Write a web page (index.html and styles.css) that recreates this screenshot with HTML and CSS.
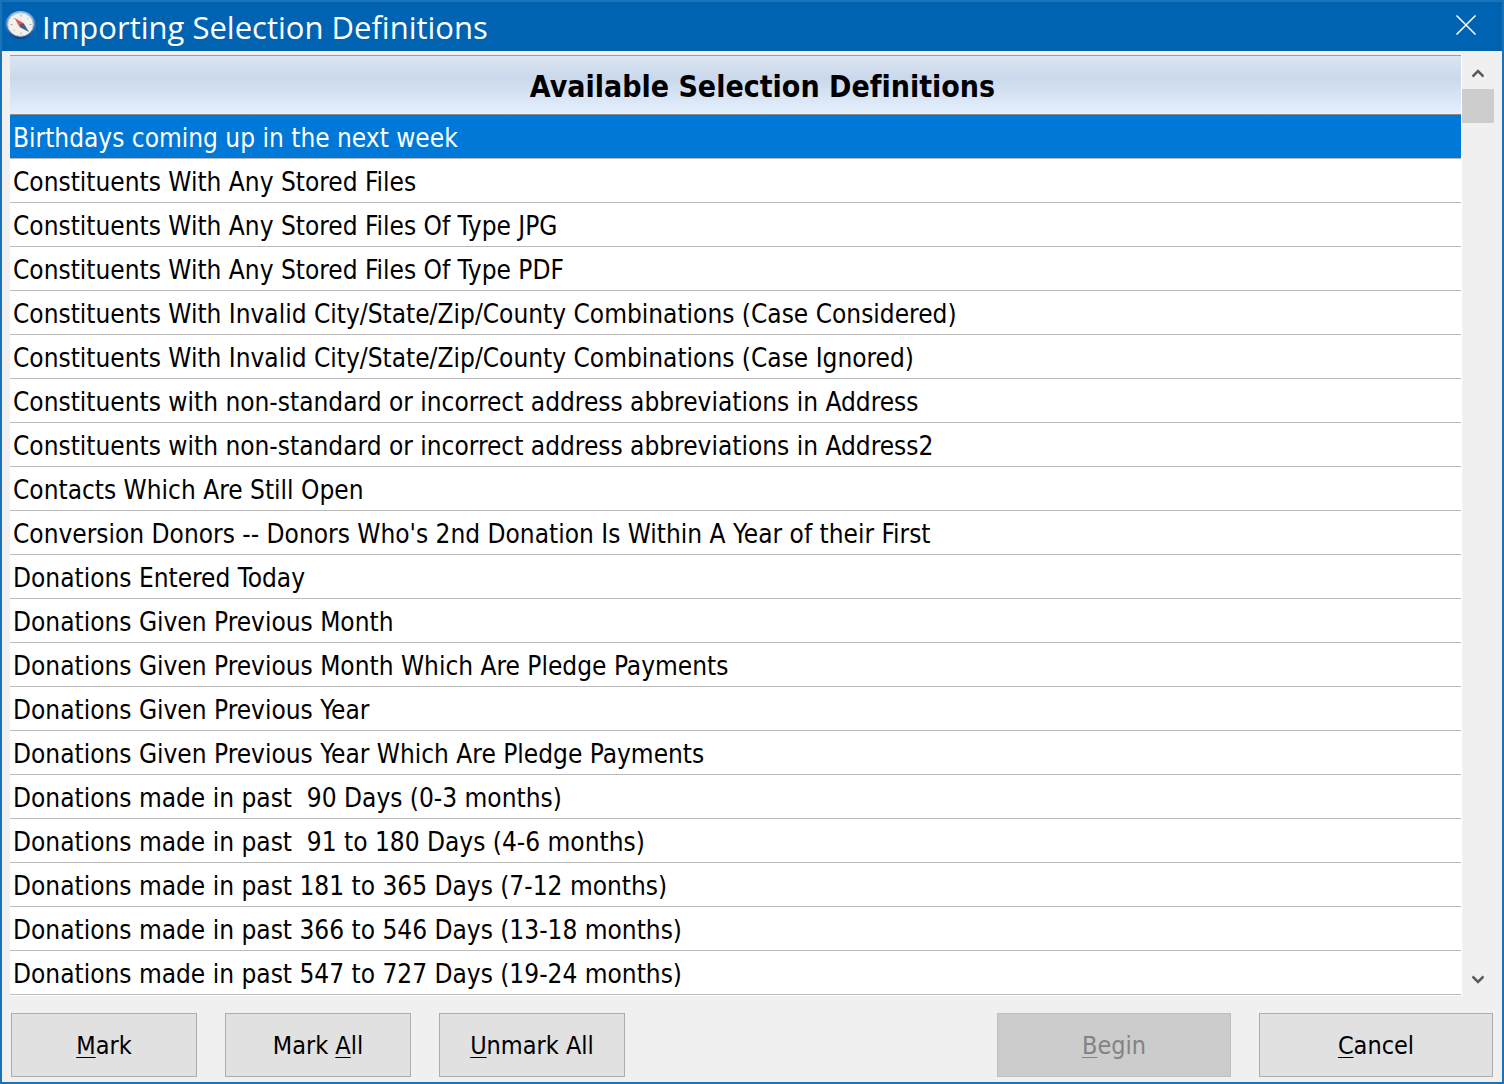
FILE: index.html
```html
<!DOCTYPE html>
<html lang="en">
<head>
<meta charset="utf-8">
<title>Importing Selection Definitions</title>
<link rel="stylesheet" href="styles.css">
</head>
<body>
<main class="window">
  <header class="titlebar">
    <svg class="app-icon" viewBox="0 0 32 30" aria-hidden="true">
      <defs>
        <linearGradient id="rim" x1="0" y1="0" x2="0" y2="1">
          <stop offset="0" stop-color="#8cc0ea"/>
          <stop offset="0.5" stop-color="#3f86cc"/>
          <stop offset="1" stop-color="#0d3f80"/>
        </linearGradient>
      </defs>
      <ellipse cx="15.500" cy="15" rx="15" ry="14" fill="url(#rim)"/>
      <ellipse cx="15.500" cy="14.500" rx="12.800" ry="11.800" fill="#f3f1ec" stroke="#b9c4cf" stroke-width="1"/>
      <path d="M16 4.500v2M16 22.500v2M5.500 14.500h2M24.500 14.500h2M8.500 8l1 1M22.500 20l1 1M23.500 8l-1 1M8.500 21l1-1" stroke="#aaa89f" stroke-width="1"/>
      <path d="M9.500 8 18.500 13 14.500 17Z" fill="#dc5a5a"/>
      <path d="M24 22 14.500 17 18.500 13Z" fill="#3d5f8e"/>
      <circle cx="16.500" cy="15" r="1.500" fill="#6d4b6b"/>
    </svg>
    <h1 class="title">Importing Selection Definitions</h1>
    <button class="close" type="button" aria-label="Close">
      <svg class="close-icon" viewBox="0 0 20 20" aria-hidden="true"><path d="M.5.5l19 19M19.500.5l-19 19" stroke="#fff" stroke-width="1.500"/></svg>
    </button>
  </header>

  <div class="content">
    <div class="list">
      <table class="definitions">
        <thead><tr><th scope="col">Available Selection Definitions</th></tr></thead>
        <tbody>
          <tr class="selected"><td>Birthdays coming up in the next week</td></tr>
          <tr><td>Constituents With Any Stored Files</td></tr>
          <tr><td>Constituents With Any Stored Files Of Type JPG</td></tr>
          <tr><td>Constituents With Any Stored Files Of Type PDF</td></tr>
          <tr><td>Constituents With Invalid City/State/Zip/County Combinations (Case Considered)</td></tr>
          <tr><td>Constituents With Invalid City/State/Zip/County Combinations (Case Ignored)</td></tr>
          <tr><td>Constituents with non-standard or incorrect address abbreviations in Address</td></tr>
          <tr><td>Constituents with non-standard or incorrect address abbreviations in Address2</td></tr>
          <tr><td>Contacts Which Are Still Open</td></tr>
          <tr><td>Conversion Donors -- Donors Who's 2nd Donation Is Within A Year of their First</td></tr>
          <tr><td>Donations Entered Today</td></tr>
          <tr><td>Donations Given Previous Month</td></tr>
          <tr><td>Donations Given Previous Month Which Are Pledge Payments</td></tr>
          <tr><td>Donations Given Previous Year</td></tr>
          <tr><td>Donations Given Previous Year Which Are Pledge Payments</td></tr>
          <tr><td>Donations made in past  90 Days (0-3 months)</td></tr>
          <tr><td>Donations made in past  91 to 180 Days (4-6 months)</td></tr>
          <tr><td>Donations made in past 181 to 365 Days (7-12 months)</td></tr>
          <tr><td>Donations made in past 366 to 546 Days (13-18 months)</td></tr>
          <tr><td>Donations made in past 547 to 727 Days (19-24 months)</td></tr>
        </tbody>
      </table>
      <div class="scrollbar">
        <button class="arrow" type="button" aria-label="Scroll up">
          <svg class="arrow-icon" viewBox="0 0 12 10" aria-hidden="true"><path d="M.5 7.500 6 2l5.500 5.500" fill="none" stroke="#5a5a5a" stroke-width="2.500"/></svg>
        </button>
        <div class="thumb"></div>
        <button class="arrow arrow-down" type="button" aria-label="Scroll down">
          <svg class="arrow-icon" viewBox="0 0 12 10" aria-hidden="true"><path d="M.5 2.500 6 8l5.500-5.500" fill="none" stroke="#5a5a5a" stroke-width="2.500"/></svg>
        </button>
      </div>
    </div>

    <footer class="actions">
      <button class="button" type="button"><span><u>M</u>ark</span></button>
      <button class="button" type="button"><span>Mark <u>A</u>ll</span></button>
      <button class="button" type="button"><span><u>U</u>nmark All</span></button>
      <button class="button button-wide push" type="button" disabled><span><u>B</u>egin</span></button>
      <button class="button button-wide" type="button"><span><u>C</u>ancel</span></button>
    </footer>
  </div>
</main>
</body>
</html>
```
FILE: styles.css
```css
* {
  box-sizing: border-box;
}

body {
  margin: 0;
  background: #f0f0f0;
  color: #000;
  font-family: "DejaVu Sans Condensed", "DejaVu Sans", sans-serif;
  font-size: 26px;
  font-variant-ligatures: none;
}

.window {
  display: flex;
  flex-direction: column;
  min-height: 100vh;
  border: 2px solid #1a73b9;
}

.titlebar {
  display: flex;
  align-items: center;
  height: 49px;
  padding: 0 26px 0 3px;
  background: #0063b1;
  color: #fff;
}

.app-icon {
  width: 32px;
  height: 30px;
  margin-bottom: 4px;
}

.title {
  flex: 1;
  margin: 0 0 0 5px;
  font-family: "Open Sans", "Noto Sans", sans-serif;
  font-size: 31px;
  font-weight: 400;
  line-height: 40px;
}

.close {
  display: flex;
  margin-bottom: 4px;
  padding: 0;
  border: 0;
  background: none;
}

.close-icon {
  width: 20px;
  height: 20px;
}

.content {
  display: flex;
  flex: 1;
  flex-direction: column;
  padding: 4px 8px 5px;
}

.list {
  display: flex;
  background: #fff;
  padding-bottom: 1px;
}

.definitions {
  flex: 1;
  border-spacing: 0;
  margin-right: 1px;
}

.definitions th {
  height: 60px;
  padding: 4px 0 0 54px;
  border-top: 1px solid #999ca1;
  border-bottom: 1px solid #8c8c8c;
  background: linear-gradient(#dbe5f3, #cddaeb 34%, #c9d8eb 37%, #e5f0fd);
  font-size: 30px;
  font-weight: 700;
  line-height: 36px;
}

.definitions td {
  height: 44px;
  padding: 2px 3px 0;
  border-bottom: 1px solid #bbb;
  line-height: 36px;
  white-space: pre;
}

.selected {
  background: #0078d7;
  color: #fff;
}

.scrollbar {
  display: flex;
  flex-direction: column;
  width: 32px;
  margin-bottom: -1px;
  background: #f0f0f0;
}

.arrow {
  display: flex;
  align-items: center;
  justify-content: center;
  height: 34px;
  padding: 3px 0 0;
  border: 0;
  background: none;
}

.arrow-down {
  margin-top: auto;
  padding: 0;
}

.arrow-icon {
  width: 12px;
  height: 10px;
}

.thumb {
  height: 34px;
  background: #cdcdcd;
}

.actions {
  display: flex;
  gap: 28px;
  margin-top: 17px;
  padding: 0 1px;
}

.button {
  width: 186px;
  height: 64px;
  padding: 0;
  border: 1px solid #adadad;
  background: #e1e1e1;
  color: #000;
  font-family: inherit;
  font-size: 25px;
}

.button-wide {
  width: 234px;
}

.button:disabled {
  border-color: #bfbfbf;
  background: #ccc;
  color: #838383;
}

.push {
  margin-left: auto;
}

.button u {
  text-decoration-thickness: 1px;
  text-underline-offset: 3px;
  text-decoration-skip-ink: none;
}
```
